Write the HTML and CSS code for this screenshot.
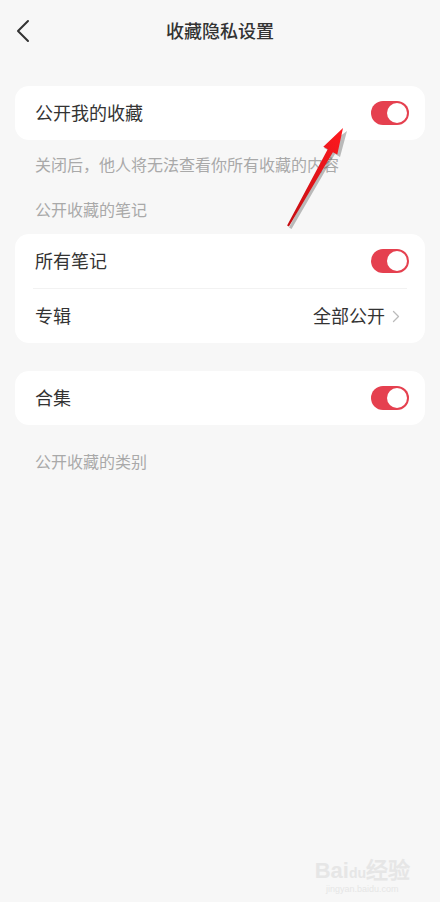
FILE: index.html
```html
<!DOCTYPE html>
<html lang="zh-CN">
<head>
    <meta charset="UTF-8">
    <meta name="viewport" content="width=device-width, initial-scale=1.0">
    <title>收藏隐私设置</title>
    <link rel="stylesheet" href="styles.css">
</head>
<body>
    <div class="page">
        <header class="topbar">
            <svg class="back" width="14" height="24" viewBox="0 0 14 24"><path d="M12 2 L2 12 L12 22" fill="none" stroke="#333" stroke-width="2" stroke-linecap="round" stroke-linejoin="round"/></svg>
            <h1>收藏隐私设置</h1>
        </header>

        <div class="card first">
            <div class="row">
                <span class="label">公开我的收藏</span>
                <span class="switch"></span>
            </div>
        </div>
        <p class="hint">关闭后，他人将无法查看你所有收藏的内容</p>
        <p class="hint section">公开收藏的笔记</p>

        <div class="card">
            <div class="row">
                <span class="label">所有笔记</span>
                <span class="switch"></span>
            </div>
            <div class="divider"></div>
            <div class="row">
                <span class="label">专辑</span>
                <span class="value"><span class="label">全部公开</span>
                    <svg width="8" height="13" viewBox="0 0 8 13"><path d="M1.5 1.5 L6.5 6.5 L1.5 11.5" fill="none" stroke="#bbb" stroke-width="1.3" stroke-linecap="round" stroke-linejoin="round"/></svg>
                </span>
            </div>
        </div>

        <div class="card spaced">
            <div class="row">
                <span class="label">合集</span>
                <span class="switch"></span>
            </div>
        </div>
        <p class="hint section lower">公开收藏的类别</p>

        <!-- annotation arrow -->
        <svg class="arrow" width="440" height="260" viewBox="0 0 440 260">
            <defs>
                <linearGradient id="ag" x1="0" y1="1" x2="1" y2="0">
                    <stop offset="0" stop-color="#c40d12"/>
                    <stop offset="1" stop-color="#ff1a1f"/>
                </linearGradient>
            </defs>
            <polygon points="345,129 338,155 333,152 289.5,227 287,225.5 327.5,149 322,146" fill="#444" opacity="0.35" transform="translate(2,2)"/>
            <polygon points="343,128 337.3,154.6 332.9,152.2 288.9,226.5 287.1,225.5 327.7,149.2 323.3,146.8" fill="url(#ag)"/>
        </svg>

        <div class="watermark">
            <span class="wm-big">Bai<span class="wm-du">du</span>经验</span>
            <span class="wm-small">jingyan.baidu.com</span>
        </div>
    </div>
</body>
</html>
```

FILE: styles.css
```css
* { box-sizing: border-box; }
body {
    margin: 0;
    background-color: #f7f7f7;
    font-family: "Noto Sans CJK SC", "Noto Sans", sans-serif;
    color: #333;
}
.page {
    position: relative;
    width: 440px;
    height: 902px;
    overflow: hidden;
}
.topbar {
    height: 62px;
    display: flex;
    align-items: center;
    justify-content: center;
    position: relative;
}
.topbar h1 {
    margin: 0 0 2px;
    font-size: 18px;
    line-height: 24px;
    font-weight: 500;
    color: #333;
}
.back {
    position: absolute;
    left: 16px;
    top: 19px;
}
.card {
    background: #fff;
    margin: 0 15px;
    border-radius: 14px;
    padding: 0 16px 0 20px;
}
.card.first { margin-top: 24px; }
.card.spaced { margin-top: 28px; }
.row {
    height: 54px;
    display: flex;
    align-items: center;
    justify-content: space-between;
    color: #333;
}
.label {
    font-size: 18px;
    line-height: 22px;
    padding-bottom: 3px;
}
.divider {
    height: 1px;
    background: #f2f2f2;
    margin: 0 2px 0 -2px;
}
.switch {
    width: 38px;
    height: 24px;
    border-radius: 12px;
    background-color: #e5404f;
    position: relative;
}
.switch::after {
    content: "";
    position: absolute;
    right: 2px;
    top: 2px;
    width: 20px;
    height: 20px;
    border-radius: 50%;
    background: #fff;
}
.value {
    display: flex;
    align-items: center;
    gap: 7px;
    color: #333;
    margin-right: 9px;
}
.hint {
    margin: 13px 0 0 35px;
    font-size: 16px;
    line-height: 22px;
    color: #a9a9a9;
}
.hint.section { margin-top: 23px; margin-bottom: 14px; }
.hint.lower { margin-top: 25px; }
.arrow {
    position: absolute;
    left: 0;
    top: 0;
    pointer-events: none;
}
.watermark {
    position: absolute;
    right: 30px;
    bottom: 8px;
    display: flex;
    flex-direction: column;
    align-items: center;
    color: #e6e6e6;
}
.wm-big { font-family: "Liberation Sans", sans-serif; font-size: 22px; font-weight: bold; }
.wm-du { font-size: 14px; }
.wm-small { font-size: 9px; font-family: "Liberation Sans", sans-serif; }
```
